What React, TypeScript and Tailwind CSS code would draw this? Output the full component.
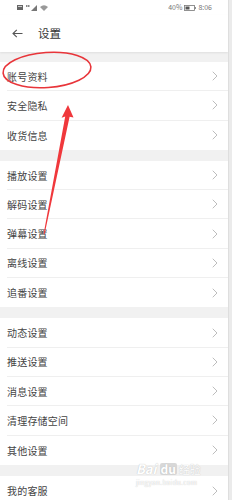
import React from 'react';

const groups: string[][] = [
  ['账号资料', '安全隐私', '收货信息'],
  ['播放设置', '解码设置', '弹幕设置', '离线设置', '追番设置'],
  ['动态设置', '推送设置', '消息设置', '清理存储空间', '其他设置'],
  ['我的客服'],
];

function Chevron() {
  return (
    <svg width="6" height="10" viewBox="0 0 6 10" fill="none">
      <path d="M1 1l4 4-4 4" stroke="#bdbdbd" strokeWidth="1" strokeLinecap="round" strokeLinejoin="round" />
    </svg>
  );
}

function StatusBar() {
  return (
    <div className="h-[15px] shrink-0 bg-white flex items-center justify-between pl-[17px] pr-[16px] text-[7px] text-[#777]">
      <div className="flex items-center gap-[3px]">
        {/* sim */}
        <svg width="6" height="5" viewBox="0 0 6 5">
          <rect x="0" y="0" width="6" height="5" fill="#666" />
          <rect x="1" y="1" width="4" height="1" fill="#ccc" />
        </svg>
        {/* 4G signal */}
        <svg width="11" height="6" viewBox="0 0 11 6">
          <rect x="0" y="0" width="1.5" height="2" fill="#888" />
          <rect x="2" y="0" width="1.5" height="2" fill="#888" />
          <path d="M5 6 L11 0 L11 6 Z" fill="#777" />
        </svg>
        {/* wifi */}
        <svg width="8" height="6" viewBox="0 0 8 6">
          <path d="M0 2 Q4 -1.5 8 2 L4 6 Z" fill="#999" />
        </svg>
      </div>
      <div className="flex items-center gap-[2px]">
        <span>40%</span>
        <svg width="12" height="6" viewBox="0 0 12 6">
          <rect x="0.5" y="0.5" width="10" height="5" fill="none" stroke="#777" strokeWidth="0.8" />
          <rect x="1.5" y="1.5" width="4" height="3" fill="#555" />
          <rect x="10.8" y="2" width="1" height="2" fill="#777" />
        </svg>
        <span>8:06</span>
      </div>
    </div>
  );
}

export default function App() {
  return (
    <div
      className="relative w-[232px] h-[500px] overflow-hidden flex bg-[#f1f1f1]"
      style={{ fontFamily: '"Noto Sans CJK SC", "Noto Sans", sans-serif' }}
    >
      <div className="w-[228px] shrink-0 flex flex-col">
        <StatusBar />

        {/* Header */}
        <div className="h-[37px] shrink-0 bg-white flex items-center shadow-[0_1px_2px_rgba(0,0,0,0.08)]">
          <svg className="ml-[12px]" width="11" height="9" viewBox="0 0 11 9" fill="none">
            <path d="M10.5 4.5H1M4.8 0.8L1 4.5l3.8 3.7" stroke="#555" strokeWidth="1.1" />
          </svg>
          <span className="ml-[15px] text-[11.5px] text-[#333]">设置</span>
        </div>

        <div className="shrink-0 flex flex-col gap-[11px] pt-[10px]">
          {groups.map((items, gi) => (
            <div key={gi} className="bg-white shrink-0">
              {items.map((label, i) => (
                <div
                  key={label}
                  className={`h-[29.3px] ml-[7px] pr-[10px] flex items-center justify-between ${
                    i < items.length - 1 ? 'border-b border-[#efefef]' : ''
                  }`}
                >
                  <span className="text-[10px] text-[#444] tracking-[0.2px]">{label}</span>
                  <Chevron />
                </div>
              ))}
            </div>
          ))}
        </div>
      </div>

      {/* right edge strip */}
      <div className="flex-1 bg-[#ebebeb] border-l border-[#dedede]" />

      {/* watermark */}
      <div className="absolute left-[136px] top-[462px] text-white pointer-events-none [text-shadow:0_0_1px_#b0b0b0]">
        <div className="flex items-end leading-none">
          <span className="text-[13px] font-bold italic">Bai</span>
          <span className="text-[12px] font-bold ml-[3px] px-[1px] rounded-[2px] bg-[#d8d8d8]">du</span>
          <span className="text-[11px] ml-[2px]">经验</span>
        </div>
        <div className="text-[6.5px] mt-[3px] tracking-[0.3px]">jingyan.baidu.com</div>
      </div>

      {/* annotation */}
      <svg className="absolute inset-0 pointer-events-none" width="232" height="500" viewBox="0 0 232 500">
        <ellipse
          cx="47"
          cy="70"
          rx="44"
          ry="17.5"
          transform="rotate(-4 47 70)"
          fill="none"
          stroke="#e8353a"
          strokeWidth="1.6"
        />
        <polygon
          points="68,105 73.5,117.5 69.6,116.8 44.6,234 43.6,234 65.2,116.5 61.6,117.8"
          fill="#f0383c"
        />
      </svg>
    </div>
  );
}
